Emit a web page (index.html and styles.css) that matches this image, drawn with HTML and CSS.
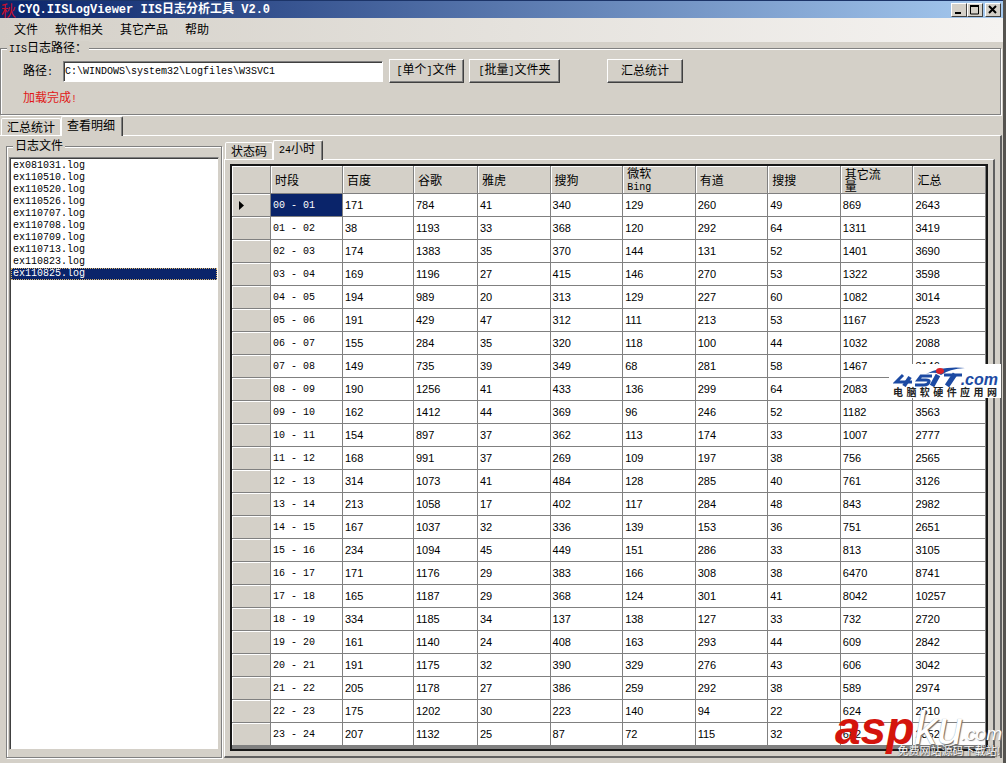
FILE: index.html
```
<!DOCTYPE html>
<html lang="zh-CN">
<head>
    <meta charset="UTF-8">
    <meta name="viewport" content="width=device-width, initial-scale=1.0">
    <title>CYQ.IISLogViewer IIS日志分析工具 V2.0</title>
    <link rel="stylesheet" href="styles.css">
</head>
<body>
<div class="window">
    <header class="titlebar">
        <span class="app-icon">秋</span>
        <h1>CYQ.IISLogViewer IIS<span class="cjk">日志分析工具</span> V2.0</h1>
        <div class="window-buttons">
            <button type="button" aria-label="最小化"><svg width="11" height="10"><path d="M2 8h6" stroke="#000" stroke-width="2"/></svg></button>
            <button type="button" aria-label="最大化"><svg width="11" height="10"><path d="M1.5 1v8h8V1M1 1h9" fill="none" stroke="#000"/><path d="M1 1h9" stroke="#000" stroke-width="2"/></svg></button>
            <button type="button" class="close" aria-label="关闭"><svg width="11" height="10"><path d="M2 1l7 7M9 1L2 8" stroke="#000" stroke-width="2"/></svg></button>
        </div>
    </header>

    <nav class="menu">
        <a href="#">文件</a>
        <a href="#">软件相关</a>
        <a href="#">其它产品</a>
        <a href="#">帮助</a>
    </nav>

    <form class="group path-group">
        <div class="group-title"><span class="mono">IIS</span>日志路径：</div>
        <div class="path-row">
            <label for="logPath">路径<span class="mono">:</span></label>
            <input type="text" id="logPath" value="C:\WINDOWS\system32\Logfiles\W3SVC1">
            <button type="button" class="btn single"><span class="mono">[</span>单个<span class="mono">]</span>文件</button>
            <button type="button" class="btn batch"><span class="mono">[</span>批量<span class="mono">]</span>文件夹</button>
            <button type="button" class="btn total">汇总统计</button>
        </div>
        <p class="status">加载完成<span class="mono">!</span></p>
    </form>

    <div class="tabs">
        <button type="button" class="tab">汇总统计</button>
        <button type="button" class="tab active">查看明细</button>
    </div>

    <main class="page">
        <section class="group files-group">
            <div class="group-title">日志文件</div>
            <ul class="files">
                <li>ex081031.log</li>
                <li>ex110510.log</li>
                <li>ex110520.log</li>
                <li>ex110526.log</li>
                <li>ex110707.log</li>
                <li>ex110708.log</li>
                <li>ex110709.log</li>
                <li>ex110713.log</li>
                <li>ex110823.log</li>
                <li class="selected">ex110825.log</li>
            </ul>
        </section>

        <section class="detail">
            <div class="tabs">
                <button type="button" class="tab">状态码</button>
                <button type="button" class="tab active"><span class="mono">24</span>小时</button>
            </div>
            <div class="detail-page">
                <div class="grid">
                    <table>
                        <colgroup>
                            <col class="c-head"><col class="c-time"><col class="c-baidu"><col class="c-google"><col><col><col><col><col><col><col>
                        </colgroup>
                        <thead>
                            <tr>
                                <th></th>
                                <th>时段</th>
                                <th>百度</th>
                                <th>谷歌</th>
                                <th>雅虎</th>
                                <th>搜狗</th>
                                <th>微软<br><span class="mono">Bing</span></th>
                                <th>有道</th>
                                <th>搜搜</th>
                                <th>其它流<br>量</th>
                                <th>汇总</th>
                            </tr>
                        </thead>
                        <tbody id="rows"></tbody>
                    </table>
                </div>
            </div>
        </section>
    </main>

    <div class="mark mark-45it">
        <svg width="74" height="21" viewBox="0 0 74 21" aria-hidden="true">
            <g fill="none" stroke="#1c4aa3">
                <path d="M10 9L3 16h16" stroke-width="3"/>
                <path d="M17 11l-6 9" stroke-width="4"/>
                <path d="M39 10H28l-3 4h8q4 0 3 2-1 3-5 3h-9" stroke-width="3"/>
                <path d="M45 9l-6 11M62 8l-8 12" stroke-width="5"/>
                <path d="M51 9h18" stroke-width="3"/>
            </g>
            <path d="M33 8Q48 0 72 2 56 3 48 9l-4-2Q38 6 33 8z" fill="#1c4aa3"/>
            <ellipse cx="47" cy="5" rx="4" ry="3" fill="#d8232a"/>
        </svg>
        <b>.com</b>
        <span class="slogan"><i>电</i><i>脑</i><i>软</i><i>硬</i><i>件</i><i>应</i><i>用</i><i>网</i></span>
    </div>
    <div class="mark mark-aspku">
        <b class="asp">asp</b><b class="ku">ku</b><i>.com</i>
        <span>免费网站源码下载站!</span>
    </div>
</div>
<script src="script.js"></script>
</body>
</html>
```
FILE: styles.css
```
* {
    box-sizing: border-box;
}

body {
    margin: 0;
    background: #d4d0c8;
    color: #000;
    font: 12px/12px "Noto Sans CJK SC", sans-serif;
}

button, input {
    font: inherit;
    color: inherit;
}

.mono {
    font-family: "Liberation Mono", monospace;
    font-size: 10px;
}

.window {
    position: relative;
    display: flex;
    flex-direction: column;
    min-height: 100vh;
    padding-bottom: 5px;
    border-right: 3px solid #55534f;
}

/* title bar */
.titlebar {
    display: flex;
    align-items: center;
    height: 18px;
    padding: 0 2px 0 1px;
    background: linear-gradient(to right, #0a246a, #a6caf0);
    border-top: 1px solid #1c3468;
}

.titlebar h1 {
    flex: 1;
    margin: 0 0 0 2px;
    color: #fff;
    font: bold 12px/14px "Liberation Mono", "Noto Sans CJK SC", monospace;
}

.titlebar .cjk {
    font-size: 12px;
    line-height: 12px;
}

.app-icon {
    color: #c8102e;
    font-size: 15px;
    line-height: 16px;
}

.window-buttons {
    display: flex;
}

.window-buttons button {
    display: flex;
    width: 16px;
    height: 14px;
    padding: 1px;
    background: #d4d0c8;
    border: 1px solid;
    border-color: #fff #404040 #404040 #fff;
}

.window-buttons .close {
    margin-left: 2px;
}

/* menu */
.menu {
    display: flex;
    gap: 17px;
    height: 24px;
    padding: 0 14px 2px;
    align-items: center;
    background: linear-gradient(to right, #d4d0c8, #f5f3f1);
}

.menu a {
    color: #000;
    text-decoration: none;
}

/* group boxes */
.group {
    position: relative;
    border: 1px solid #808080;
    box-shadow: 1px 1px 0 #fff, inset 1px 1px 0 #fff;
}

.group-title {
    position: absolute;
    top: -8px;
    left: 6px;
    padding: 0 2px;
    background: #d4d0c8;
}

.path-group {
    height: 67px;
    margin: 6px 2px 0 0;
    padding: 10px 22px;
}

.path-row {
    display: flex;
    align-items: center;
    height: 24px;
}

.path-row label {
    width: 40px;
}

.path-row input {
    width: 320px;
    height: 21px;
    margin-right: 6px;
    padding: 0 1px;
    background: #fff;
    border: 1px solid;
    border-color: #808080 #fff #fff #808080;
    box-shadow: inset 1px 1px 0 #404040;
    font: 10px/16px "Liberation Mono", monospace;
}

.btn {
    height: 24px;
    padding: 0 0 2px;
    background: #d4d0c8;
    border: 1px solid;
    border-color: #fff #404040 #404040 #fff;
    box-shadow: inset -1px -1px 0 #808080;
}

.single {
    width: 75px;
    margin-right: 5px;
}

.batch {
    width: 91px;
    margin-right: 47px;
}

.total {
    width: 76px;
}

.status {
    margin: 8px 0 0;
    color: #e01818;
}

/* tabs */
.tabs {
    display: flex;
    align-items: flex-end;
    height: 20px;
    padding-left: 1px;
}

.tab {
    height: 17px;
    padding: 0 5px 1px;
    background: #d4d0c8;
    border: 1px solid #fff;
    border-width: 1px 1px 0 1px;
    border-radius: 2px 2px 0 0;
    line-height: 14px;
}

.tab.active {
    position: relative;
    height: 20px;
    margin-bottom: -1px;
    padding: 0 7px 3px 5px;
    border-right: 1px solid #404040;
    box-shadow: inset -1px 0 0 #808080;
}

.page {
    flex: 1;
    display: flex;
    gap: 2px;
    margin-right: 1px;
    padding: 5px 5px 0 6px;
    border-top: 1px solid #fff;
    border-right: 2px solid #606060;
}

.files-group {
    display: flex;
    width: 216px;
    margin-top: 5px;
    padding: 10px 2px 7px;
}

.files {
    flex: 1;
    margin: 0;
    padding: 2px 1px;
    background: #fff;
    border: 1px solid;
    border-color: #808080 #d4d0c8 #d4d0c8 #808080;
    box-shadow: inset 1px 1px 0 #404040;
    font: 10px/12px "Liberation Mono", monospace;
    list-style: none;
}

.files li {
    padding-left: 2px;
}

.files .selected {
    background: #0a246a;
    color: #fff;
    outline: 1px dotted #d8b46a;
    outline-offset: -1px;
}

/* detail grid */
.detail {
    flex: 1;
    display: flex;
    flex-direction: column;
    min-width: 0;
}

.detail .tabs {
    height: 18px;
}

.detail-page {
    flex: 1;
    display: flex;
    padding: 4px 5px 5px;
    border: 1px solid #fff;
    border-right: 2px solid #606060;
    border-bottom: 2px solid #606060;
}

.grid {
    flex: 1;
    background: #808080;
    border: 2px solid #181818;
}

table {
    width: 100%;
    border-collapse: separate;
    border-spacing: 0;
    table-layout: fixed;
}

.c-head {
    width: 39px;
}

.c-time {
    width: 72px;
}

.c-baidu {
    width: 71px;
}

.c-google {
    width: 64px;
}

thead th {
    height: 28px;
    padding: 0 4px;
    background: #d4d0c8;
    border-right: 1px solid #808080;
    border-bottom: 1px solid #808080;
    box-shadow: inset 1px 1px 0 #fff;
    font-weight: normal;
    text-align: left;
}

thead .mono {
    line-height: 10px;
}

tbody th, td {
    height: 23px;
    padding: 0 2px;
    border-right: 1px solid #808080;
    border-bottom: 1px solid #808080;
    font: 11px/12px "Liberation Sans", sans-serif;
    text-align: left;
}

tbody th {
    padding-left: 6px;
    background: #d4d0c8;
    box-shadow: inset 1px 1px 0 #fff;
}

td {
    background: #fff;
}

.time {
    padding-top: 1px;
    font: 10px/12px "Liberation Mono", monospace;
}

tbody tr:first-child .time {
    background: #0a246a;
    color: #fff;
}

tbody tr:last-child > * {
    height: 22px;
    border-bottom: 0;
}

tbody svg {
    display: block;
}

/* site marks over the grid */
.mark {
    position: absolute;
    white-space: nowrap;
}

.mark-45it {
    top: 364px;
    right: 2px;
    width: 112px;
    height: 34px;
    background: #fff;
    color: #1c4aa3;
}

.mark-45it svg {
    display: block;
    margin: 2px 0 0 4px;
}

.mark-45it b {
    position: absolute;
    top: 8px;
    right: 3px;
    font: italic bold 16px/16px "Liberation Sans", sans-serif;
}

.mark-45it .slogan {
    display: flex;
    justify-content: space-between;
    padding: 0 4px;
    color: #222;
    font-size: 10px;
    line-height: 10px;
    font-weight: bold;
}

.slogan i {
    font-style: normal;
}

.mark-aspku {
    right: 0;
    bottom: 7px;
    width: 168px;
    height: 50px;
    font: bold 46px/44px "Liberation Sans", sans-serif;
    color: #fff;
}

.mark-aspku .asp {
    color: #d4140c;
    font-style: italic;
}

.mark-aspku .ku {
    font-style: italic;
    font-weight: normal;
    text-shadow: 1px 1px 1px #666, 0 0 1px #999;
}

.mark-aspku i {
    position: absolute;
    right: 1px;
    top: 18px;
    font-size: 19px;
    line-height: 20px;
    font-weight: normal;
    text-shadow: 1px 1px 1px #777;
}

.mark-aspku span {
    position: absolute;
    right: 3px;
    bottom: 0;
    font: 11px/12px "Noto Sans CJK SC", sans-serif;
    text-shadow: 1px 1px 1px #444, 0 0 1px #444;
}
```
FILE: script.js
```
// hits per hour: baidu, google, yahoo, sogou, bing, youdao, soso, other, total
const hours = [
    [171, 784, 41, 340, 129, 260, 49, 869, 2643],
    [38, 1193, 33, 368, 120, 292, 64, 1311, 3419],
    [174, 1383, 35, 370, 144, 131, 52, 1401, 3690],
    [169, 1196, 27, 415, 146, 270, 53, 1322, 3598],
    [194, 989, 20, 313, 129, 227, 60, 1082, 3014],
    [191, 429, 47, 312, 111, 213, 53, 1167, 2523],
    [155, 284, 35, 320, 118, 100, 44, 1032, 2088],
    [149, 735, 39, 349, 68, 281, 58, 1467, 3146],
    [190, 1256, 41, 433, 136, 299, 64, 2083, 4502],
    [162, 1412, 44, 369, 96, 246, 52, 1182, 3563],
    [154, 897, 37, 362, 113, 174, 33, 1007, 2777],
    [168, 991, 37, 269, 109, 197, 38, 756, 2565],
    [314, 1073, 41, 484, 128, 285, 40, 761, 3126],
    [213, 1058, 17, 402, 117, 284, 48, 843, 2982],
    [167, 1037, 32, 336, 139, 153, 36, 751, 2651],
    [234, 1094, 45, 449, 151, 286, 33, 813, 3105],
    [171, 1176, 29, 383, 166, 308, 38, 6470, 8741],
    [165, 1187, 29, 368, 124, 301, 41, 8042, 10257],
    [334, 1185, 34, 137, 138, 127, 33, 732, 2720],
    [161, 1140, 24, 408, 163, 293, 44, 609, 2842],
    [191, 1175, 32, 390, 329, 276, 43, 606, 3042],
    [205, 1178, 27, 386, 259, 292, 38, 589, 2974],
    [175, 1202, 30, 223, 140, 94, 22, 624, 2510],
    [207, 1132, 25, 87, 72, 115, 32, 682, 2352]
];

const pad = n => String(n).padStart(2, '0');
const arrow = '<svg width="6" height="9"><path d="M1 0v9l5-4.5z"/></svg>';

document.getElementById('rows').innerHTML = hours.map((row, i) =>
    `<tr><th>${i === 0 ? arrow : ''}</th><td class="time">${pad(i)} - ${pad(i + 1)}</td>` +
    row.map(n => `<td>${n}</td>`).join('') + '</tr>'
).join('');
```
